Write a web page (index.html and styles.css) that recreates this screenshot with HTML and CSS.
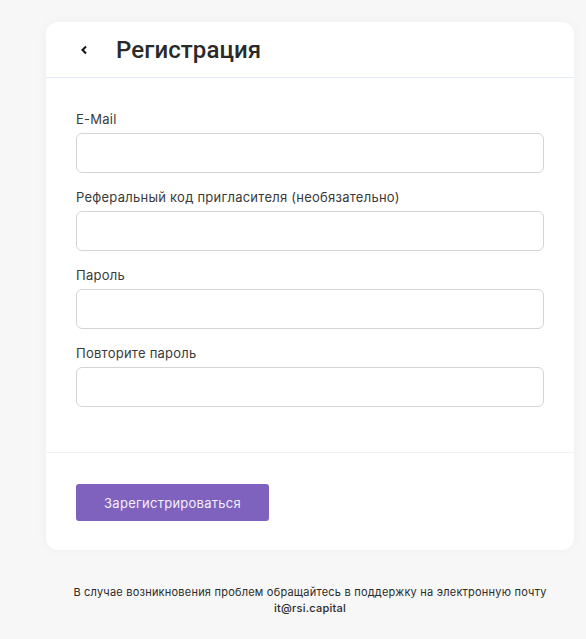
FILE: index.html
```html
<!DOCTYPE html>
<html lang="ru">
<head>
<meta charset="utf-8">
<title>Регистрация</title>
<link rel="stylesheet" href="styles.css">
</head>
<body>
<div class="page">
  <div class="card">
    <div class="card-header">
      <span class="back">
        <svg width="8" height="10" viewBox="0 0 8 10"><path d="M6 1.5 L2.5 5 L6 8.5" fill="none" stroke="#111" stroke-width="2"/></svg>
      </span>
      <h1 class="title">Регистрация</h1>
    </div>
    <div class="card-body">
      <div class="field">
        <label class="label">E-Mail</label>
        <input class="input" type="text">
      </div>
      <div class="field">
        <label class="label">Реферальный код пригласителя (необязательно)</label>
        <input class="input" type="text">
      </div>
      <div class="field">
        <label class="label">Пароль</label>
        <input class="input" type="password">
      </div>
      <div class="field">
        <label class="label">Повторите пароль</label>
        <input class="input" type="password">
      </div>
    </div>
    <div class="card-footer">
      <button class="btn">Зарегистрироваться</button>
    </div>
  </div>
  <p class="note">В случае возникновения проблем обращайтесь в поддержку на электронную почту<br><span class="mail">it@rsi.capital</span></p>
</div>
</body>
</html>
```
FILE: styles.css
```css
html, body {
  margin: 0;
  padding: 0;
  background: #f7f7f7;
  font-family: "Inter", "Noto Sans", sans-serif;
  color: #2b2b2b;
}
.page {
  width: 528px;
  margin-left: 46px;
  padding-top: 22px;
}
.card {
  background: #fff;
  border-radius: 12px;
  box-shadow: 0 0 14px rgba(0,0,0,0.035);
}
.card-header {
  height: 56px;
  box-sizing: border-box;
  border-bottom: 1px solid #e2ebf7;
  display: flex;
  align-items: center;
  padding-left: 34px;
}
.back {
  display: flex;
  width: 36px;
}
.title {
  margin: 0;
  font-family: "Roboto", sans-serif;
  font-size: 24px;
  font-weight: 500;
  color: #2a2a2a;
  letter-spacing: 0.1px;
}
.card-body {
  padding: 32px 30px 30px;
  border-bottom: 1px solid #edf2f8;
}
.field {
  display: flex;
  flex-direction: column;
  margin-bottom: 15px;
}
.label {
  font-size: 13px;
  line-height: 18px;
  color: #3a3a3a;
  letter-spacing: 0.25px;
  margin-bottom: 5px;
}
.input {
  height: 40px;
  box-sizing: border-box;
  border: 1px solid #d4d4d4;
  border-radius: 6px;
  background: #fff;
  outline: none;
}
.card-footer {
  padding: 31px 30px 29px;
}
.btn {
  width: 193px;
  height: 37px;
  background: #7e62bd;
  color: #f4f0fb;
  border: none;
  border-radius: 3px;
  font-family: inherit;
  font-size: 13px;
  letter-spacing: 0.25px;
  cursor: pointer;
}
.note {
  margin: 34px 0 0;
  text-align: center;
  font-size: 11px;
  line-height: 16px;
  letter-spacing: 0.22px;
  color: #2b2b2b;
}
.mail {
  font-weight: 500;
}
```
